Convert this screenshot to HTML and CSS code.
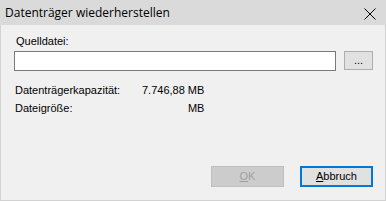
FILE: index.html
```html
<!DOCTYPE html>
<html>
<head>
<meta charset="utf-8">
<link rel="stylesheet" href="styles.css">
</head>
<body>
<div class="window">
  <div class="titlebar">
    <span class="title">Datenträger wiederherstellen</span>
    <svg class="close" width="12" height="12" viewBox="0 0 12 12"><path d="M0.5 0.5 L11.5 11.5 M11.5 0.5 L0.5 11.5" stroke="#000" stroke-width="1" fill="none"/></svg>
  </div>
  <div class="client">
    <div class="label">Quelldatei:</div>
    <div class="filerow">
      <div class="input"></div>
      <div class="browse">...</div>
    </div>
    <div class="info">
      <span class="key">Datenträgerkapazität:</span><span class="val">7.746,88 MB</span>
      <span class="key">Dateigröße:</span><span class="val">MB</span>
    </div>
    <div class="buttons">
      <div class="btn disabled"><u>O</u>K</div>
      <div class="btn default"><u>A</u>bbruch</div>
    </div>
  </div>
</div>
</body>
</html>
```
FILE: styles.css
```css
html, body { margin: 0; padding: 0; }
body { width: 386px; height: 201px; overflow: hidden; background: #f0f0f0; font-family: "Liberation Sans", Arial, sans-serif; font-size: 11px; color: #000; }
.window { width: 386px; height: 201px; box-sizing: border-box; border: 1px solid #d2d2d2; border-top: none; background: #f0f0f0; display: flex; flex-direction: column; }
.titlebar { height: 25px; background: #dadada; display: flex; align-items: center; justify-content: space-between; padding: 0 10px 0 5px; margin: 0 -1px; }
.title { font-family: "Open Sans", "Noto Sans", sans-serif; font-size: 12px; color: #000; }
.close { display: block; margin-top: 2px; }
.client { flex: 1; display: flex; flex-direction: column; padding: 9px 12px 0 13px; }
.label { height: 14px; line-height: 14px; padding-left: 2px; }
.filerow { display: flex; align-items: flex-start; margin-top: 3px; gap: 8px; }
.input { width: 322px; height: 20px; box-sizing: border-box; border: 1px solid #7a7a7a; background: #fff; }
.browse { width: 29px; height: 19px; box-sizing: border-box; border: 1px solid #adadad; background: #e1e1e1; text-align: center; line-height: 17px; font-size: 11px; }
.info { display: grid; grid-template-columns: 127px max-content; justify-content: start; row-gap: 6px; margin-top: 13px; padding-left: 1px; }
.info span { line-height: 12px; white-space: nowrap; }
.val { text-align: right; }
.buttons { display: flex; justify-content: flex-end; gap: 16px; margin-top: auto; margin-bottom: 13px; }
.btn { width: 73px; height: 21px; box-sizing: border-box; border: 1px solid #adadad; background: #e1e1e1; text-align: center; line-height: 19px; }
.btn u { text-decoration-thickness: 1px; text-underline-offset: 1px; }
.btn.disabled { background: #cccccc; border-color: #bfbfbf; color: #a0a0a0; }
.btn.default { border: 2px solid #0078d7; line-height: 17px; }
```
